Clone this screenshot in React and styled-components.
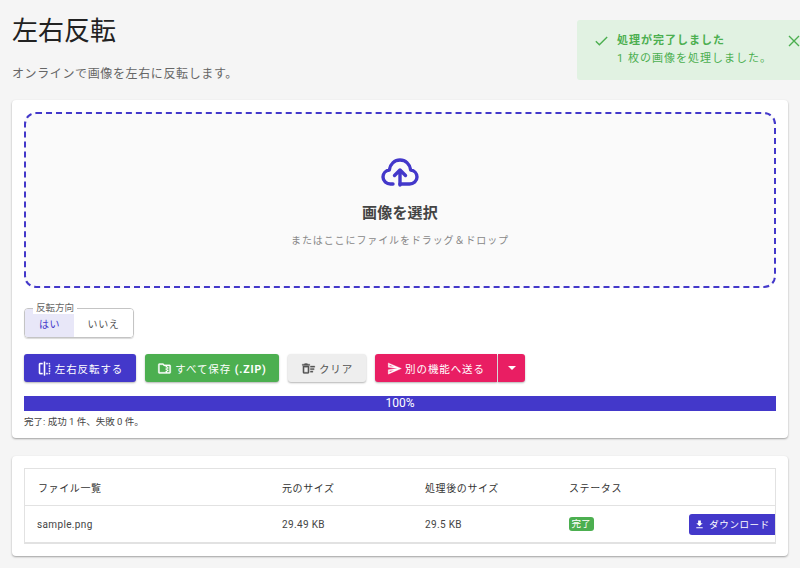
import React from "react";
import styled, { createGlobalStyle } from "styled-components";

const Global = createGlobalStyle`
  html, body { margin: 0; padding: 0; background: #f5f5f5; overflow: hidden; }
  body { font-family: Roboto, "Noto Sans CJK JP", sans-serif; color: rgba(0,0,0,.87); }
`;
const Page = styled.div`
  position: relative; width: 800px; height: 568px; box-sizing: border-box;
  padding: 12px 12px 0; display: flex; flex-direction: column; overflow: hidden;
`;
const Title = styled.h1`
  margin: 0; font-size: 26px; font-weight: 400; line-height: 38px; color: #222;
`;
const Sub = styled.p`
  margin: 16px 0 0; font-size: 12px; line-height: 16px; letter-spacing: .62px; color: #666;
`;
const Card = styled.section`
  background: #fff; border-radius: 4px; padding: 12px; box-sizing: border-box;
  box-shadow: 0 1px 2px rgba(0,0,0,.35);
  margin-top: ${p => p.$mt}px; height: ${p => p.$h}px;
`;
const Drop = styled.div`
  height: 176px; box-sizing: border-box; border: 2px dashed #4338ca; border-radius: 12px;
  background: #fafafa; display: flex; flex-direction: column; align-items: center;
  padding-top: 43px;
`;
const DropTitle = styled.div`
  margin-top: 15px; font-size: 15px; line-height: 22px; font-weight: 700; color: #444; letter-spacing: .2px;
`;
const DropHint = styled.div`
  margin-top: 9px; font-size: 10px; line-height: 16px; color: #888; letter-spacing: .9px;
`;
const Field = styled.fieldset`
  position: relative; margin: 20px 0 0; padding: 0; width: 110px; height: 30px; box-sizing: border-box;
  border: 1px solid #c4c4c4; border-radius: 4px; display: flex; box-shadow: 0 1px 1px rgba(0,0,0,.15);
`;
const Legend = styled.span`
  position: absolute; left: 8px; top: -7px; background: #fff; padding: 0 3px;
  font-size: 9.5px; line-height: 12px; color: #666;
`;
const Opt = styled.div`
  display: flex; align-items: center; justify-content: center; font-size: 10px; letter-spacing: .6px;
  width: ${p => p.$w}px; color: ${p => p.$on ? "#4338ca" : "#555"};
  background: ${p => p.$on ? "#e8e7f8" : "#fff"}; border-radius: ${p => p.$on ? "3px 0 0 3px" : "0 3px 3px 0"};
`;
const Actions = styled.div`
  display: flex; gap: 9px; margin-top: 16px; height: 28px;
`;
const Btn = styled.button`
  display: flex; align-items: center; justify-content: center; gap: 3px; border: 0; padding: 0;
  width: ${p => p.$w}px; height: 28px; border-radius: 3px; font-family: inherit; font-size: 10.5px;
  letter-spacing: .9px; color: ${p => p.$fg || "#fff"}; background: ${p => p.$bg};
  box-shadow: 0 1px 2px rgba(0,0,0,.3);
`;
const Label = styled.span`white-space: pre;`;
const Ext = styled.span`font-weight: 700;`;
const Split = styled.div`display: flex; gap: 1px;`;
const SplitMain = styled(Btn)`border-radius: 3px 0 0 3px;`;
const SplitEnd = styled(Btn)`border-radius: 0 3px 3px 0;`;
const Progress = styled.div`
  margin-top: 14px; height: 15px; background: #4338ca; color: #fff; font-size: 12px; line-height: 15px;
  text-align: center;
`;
const Done = styled.div`
  margin-top: 4px; font-size: 9.5px; line-height: 14px; color: #444;
`;
const TableBox = styled.div`
  border: 1px solid #e2e2e2; border-bottom-width: 2px; height: 76px; box-sizing: border-box;
`;
const Row = styled.div`
  display: grid; grid-template-columns: 257px 143px 144px 1fr; align-items: center;
  height: ${p => p.$h}px; font-size: 10px; color: #444; letter-spacing: .35px;
  &+& { border-top: 1px solid #e2e2e2; }
`;
const HeadCell = styled.div`
  color: #333; letter-spacing: .6px;
  &:first-child { padding-left: 13px; }
`;
const NameCell = styled.div`padding-left: 12px;`;
const Cell = styled.div`display: flex; align-items: center; justify-content: space-between;`;
const Badge = styled.span`
  background: #4caf50; color: #fff; border-radius: 3px; font-size: 9.5px; line-height: 14px; padding: 0 2.5px;
`;
const DlBtn = styled.button`
  display: flex; align-items: center; justify-content: center; gap: 4px; width: 86px; height: 21px;
  border: 0; padding: 0; border-radius: 3px 0 0 3px; background: #4338ca; color: #fff; font-family: inherit;
  font-size: 9.5px; letter-spacing: .6px;
`;
const Toast = styled.div`
  position: absolute; left: 577px; top: 20px; width: 223px; height: 60px; background: #e1f2e2;
  border-radius: 3px 0 0 3px; color: #4caf50; display: flex; align-items: flex-start; box-sizing: border-box;
  padding: 12px 0 0 16px;
`;
const ToastBody = styled.div`margin-left: 7px; font-size: 11px; line-height: 18px; letter-spacing: 1px;`;
const ToastHead = styled.div`font-weight: 700; letter-spacing: 1px;`;
const Close = styled.svg`position: absolute; left: 211px; top: 15px;`;

const Mui = ({ s = 15, d, ...r }) => (
  <svg width={s} height={s} viewBox="0 0 24 24" fill="currentColor" stroke="currentColor" strokeWidth=".5" {...r}><path d={d} /></svg>
);
const FLIP = "M15 21h2v-2h-2v2zm4-12h2V7h-2v2zM3 5v14c0 1.100.9 2 2 2h4v-2H5V5h4V3H5c-1.100 0-2 .9-2 2zm16-2v2h2c0-1.100-.9-2-2-2zm-8 20h2V1h-2v22zm8-6h2v-2h-2v2zM15 5h2V3h-2v2zm4 8h2v-2h-2v2zm0 8c1.100 0 2-.9 2-2h-2v2z";
const ZIP = "M20 6h-8l-2-2H4c-1.100 0-1.990.9-1.990 2L2 18c0 1.100.9 2 2 2h16c1.100 0 2-.9 2-2V8c0-1.100-.9-2-2-2zm-4 10h2v-2h-2v-2h2v-2h-2V8h4v10h-4v-2zm0 0h-2v2H4V6h5.170l2 2H14v2h2v2h-2v2h2v2z";
const SWEEP = "M15 16h4v2h-4zm0-8h7v2h-7zm0 4h6v2h-6zM3 18c0 1.100.9 2 2 2h6c1.100 0 2-.9 2-2V8H3v10zm2-8h6v8H5zM14 5h-3l-1-1H6L5 5H2v2h12z";
const SEND = "M4.010 6.030l7.510 3.220-7.520-1 .01-2.220m7.500 8.720L4 17.970v-2.220l7.510-1M2.010 3 2 10l15 2-15 2 .01 7L23 12 2.010 3z";

export default function App() {
  return (
    <Page>
      <Global />
      <Title>左右反転</Title>
      <Sub>オンラインで画像を左右に反転します。</Sub>
      <Card $mt={18} $h={338}>
        <Drop>
          <svg width="38" height="30" viewBox="0 0 38 30" fill="none" stroke="#4338ca" strokeWidth="3.4" strokeLinecap="round" strokeLinejoin="round">
            <path d="M12 27H9.500C5.500 27 2 24 2 20c0-3.600 2.800-6.600 6.300-7C9.300 6.800 13.600 3 19 3c5.400 0 9.700 3.800 10.700 10 3.500.4 6.300 3.400 6.300 7 0 4-3.500 7-7.500 7H19" />
            <path d="M19 28V13M13.500 18.500 19 13l5.500 5.500" />
          </svg>
          <DropTitle>画像を選択</DropTitle>
          <DropHint>またはここにファイルをドラッグ＆ドロップ</DropHint>
        </Drop>
        <Field>
          <Legend>反転方向</Legend>
          <Opt $on $w={49}>はい</Opt>
          <Opt $w={59}>いいえ</Opt>
        </Field>
        <Actions>
          <Btn $w={112} $bg="#4338ca">
            <Mui d={FLIP} />
            <Label>左右反転する</Label>
          </Btn>
          <Btn $w={134} $bg="#4caf50">
            <Mui d={ZIP} />
            <Label>すべて保存 <Ext>(.ZIP)</Ext></Label>
          </Btn>
          <Btn $w={78} $bg="#eeeeee" $fg="#555">
            <Mui d={SWEEP} />
            <Label>クリア</Label>
          </Btn>
          <Split>
            <SplitMain $w={122} $bg="#e91e63">
              <Mui d={SEND} />
              <Label>別の機能へ送る</Label>
            </SplitMain>
            <SplitEnd $w={27} $bg="#e91e63">
              <svg width="8" height="4" viewBox="0 0 8 4"><path d="M0 0h8L4 4z" fill="#fff" /></svg>
            </SplitEnd>
          </Split>
        </Actions>
        <Progress>100%</Progress>
        <Done>完了: 成功 1 件、失敗 0 件。</Done>
      </Card>
      <Card $mt={18} $h={100}>
        <TableBox>
          <Row $h={36}>
            <HeadCell>ファイル一覧</HeadCell>
            <HeadCell>元のサイズ</HeadCell>
            <HeadCell>処理後のサイズ</HeadCell>
            <HeadCell>ステータス</HeadCell>
          </Row>
          <Row $h={36}>
            <NameCell>sample.png</NameCell>
            <div>29.49 KB</div>
            <div>29.5 KB</div>
            <Cell>
              <Badge>完了</Badge>
              <DlBtn>
                <svg width="11" height="11" viewBox="0 0 24 24" fill="#fff"><path d="M5 20h14v-2H5zM19 9h-4V3H9v6H5l7 7z" /></svg>
                ダウンロード
              </DlBtn>
            </Cell>
          </Row>
        </TableBox>
      </Card>
      <Toast>
        <svg width="17" height="17" viewBox="0 0 24 24" fill="none" stroke="currentColor" strokeWidth="2"><path d="M4 13l5 5L20 7" /></svg>
        <ToastBody>
          <ToastHead>処理が完了しました</ToastHead>
          1 枚の画像を処理しました。
        </ToastBody>
        <Close width="12" height="12" viewBox="0 0 12 12" stroke="#4caf50" strokeWidth="1.4"><path d="M1 1l10 10M11 1L1 11" /></Close>
      </Toast>
    </Page>
  );
}
